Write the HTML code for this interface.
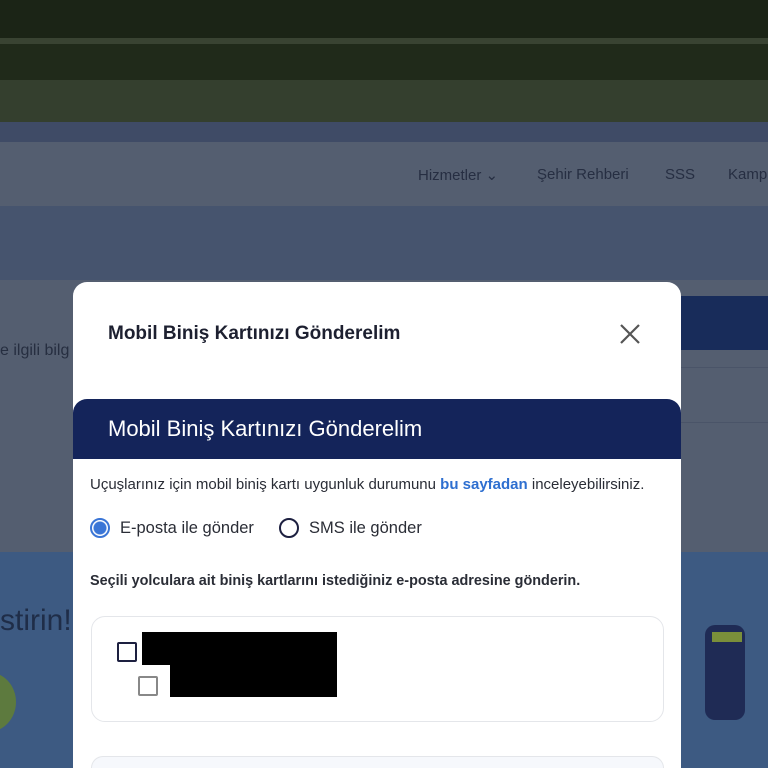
<!DOCTYPE html>
<html><head><meta charset="utf-8"><style>
*{margin:0;padding:0;box-sizing:border-box}
html,body{width:768px;height:768px;overflow:hidden}
body{position:relative;font-family:"Liberation Sans",sans-serif;background:#545e70}
.a{position:absolute;white-space:nowrap}
</style></head><body>
<div class="a" style="left:0;top:0;width:768px;height:38px;background:#1b2416"></div>
<div class="a" style="left:0;top:38px;width:768px;height:6px;background:#394332"></div>
<div class="a" style="left:0;top:44px;width:768px;height:36px;background:#202a1a"></div>
<div class="a" style="left:0;top:80px;width:768px;height:42px;background:#343f2e"></div>
<div class="a" style="left:0;top:122px;width:768px;height:20px;background:#3f4b66"></div>
<div class="a" style="left:0;top:142px;width:768px;height:64px;background:#545e70"></div>
<div class="a" style="left:0;top:206px;width:768px;height:74px;background:#46546e"></div>
<div class="a" style="left:0;top:280px;width:768px;height:272px;background:#545e70"></div>
<div class="a" style="left:0;top:552px;width:768px;height:216px;background:#3d5a82"></div>
<div class="a" style="left:660px;top:296px;width:108px;height:54px;background:#182c5a"></div>
<div class="a" style="left:660px;top:367px;width:108px;height:1px;background:#4a5468"></div>
<div class="a" style="left:660px;top:422px;width:108px;height:1px;background:#4a5468"></div>
<div class="a" style="left:-40px;top:672px;width:56px;height:60px;border-radius:50%;background:#5d7a3e"></div>
<div class="a" style="left:0;top:342px;font-size:16px;color:#262e40">e ilgili bilg</div>
<div class="a" style="left:0;top:604px;font-size:30px;color:#1f2d48">stirin!</div>
<div class="a" style="left:418px;top:166px;font-size:15px;color:#262e42">Hizmetler ⌄</div>
<div class="a" style="left:537px;top:166px;font-size:15px;color:#262e42">Şehir Rehberi</div>
<div class="a" style="left:665px;top:166px;font-size:15px;color:#262e42">SSS</div>
<div class="a" style="left:728px;top:166px;font-size:15px;color:#262e42">Kamp</div>
<div class="a" style="left:705px;top:625px;width:40px;height:95px;border-radius:10px;background:#1f2b55"></div>
<div class="a" style="left:712px;top:632px;width:30px;height:10px;background:#7a8f3a"></div>

<div class="a" style="left:73px;top:282px;width:608px;height:486px;background:#fff;border-radius:14px 14px 0 0;overflow:hidden">
 <div class="a" style="left:35px;top:41px;font-size:19px;font-weight:bold;color:#1d2030">Mobil Biniş Kartınızı Gönderelim</div>
 <svg class="a" style="left:546px;top:41px" width="22" height="22" viewBox="0 0 22 22"><path d="M2 2L20 20M20 2L2 20" stroke="#555" stroke-width="2.2"/></svg>
 <div class="a" style="left:0;top:117px;width:608px;height:60px;background:#14245a;border-radius:14px 14px 0 0"></div>
 <div class="a" style="left:35px;top:134px;font-size:22px;color:#fff">Mobil Biniş Kartınızı Gönderelim</div>
 <div class="a" style="left:17px;top:194px;font-size:15px;color:#2a2d36">Uçuşlarınız için mobil biniş kartı uygunluk durumunu <b style="color:#2e6fd0">bu sayfadan</b> inceleyebilirsiniz.</div>
 <div class="a" style="left:17px;top:236px;width:20px;height:20px;border-radius:50%;border:2px solid #3a75d6;background:radial-gradient(circle,#3a75d6 6px,#fff 7px)"></div>
 <div class="a" style="left:47px;top:237px;font-size:16.5px;color:#2a2d36">E-posta ile gönder</div>
 <div class="a" style="left:206px;top:236px;width:20px;height:20px;border-radius:50%;border:2px solid #1d2040"></div>
 <div class="a" style="left:236px;top:237px;font-size:16.5px;color:#2a2d36">SMS ile gönder</div>
 <div class="a" style="left:17px;top:291px;font-size:14.4px;font-weight:bold;color:#2a2d36">Seçili yolculara ait biniş kartlarını istediğiniz e-posta adresine gönderin.</div>
 <div class="a" style="left:18px;top:334px;width:573px;height:106px;border:1px solid #e4e6ea;border-radius:14px"></div>
 <div class="a" style="left:44px;top:360px;width:20px;height:20px;border:2px solid #1d2040;border-radius:2px"></div>
 <div class="a" style="left:65px;top:394px;width:20px;height:20px;border:2px solid #888;border-radius:2px"></div>
 <div class="a" style="left:69px;top:350px;width:195px;height:33px;background:#000"></div>
 <div class="a" style="left:97px;top:383px;width:167px;height:32px;background:#000"></div>
 <div class="a" style="left:18px;top:474px;width:573px;height:12px;border:1px solid #e4e6ea;border-bottom:none;border-radius:14px 14px 0 0;background:#f6f8fc"></div>
</div>
</body></html>
